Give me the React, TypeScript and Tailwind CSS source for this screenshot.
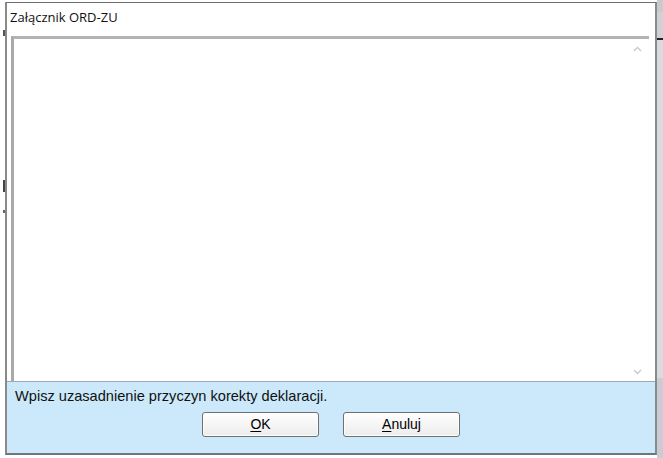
import React from "react";

const ui = { fontFamily: '"Open Sans", "Noto Sans", sans-serif' };
const arial = { fontFamily: '"Liberation Sans", Arial, sans-serif' };

function DialogButton({ hot, rest }: { hot: string; rest: string }) {
  return (
    <button
      type="button"
      className="flex h-[25px] w-[117px] items-center justify-center rounded-[3px] border border-[#707070] bg-gradient-to-b from-[#ffffff] to-[#ececec] text-[14px] text-black shadow-[inset_0_0_0_1px_#fdfdfd]"
      style={arial}
    >
      <span className="underline underline-offset-2">{hot}</span>
      {rest}
    </button>
  );
}

export default function App() {
  return (
    <div className="flex h-[458px] w-[663px] overflow-hidden bg-white">
      {/* app window peeking out on the left */}
      <div className="relative w-[5px] shrink-0 bg-white">
        <div className="absolute left-[3px] top-[30px] h-[6px] w-[2px] bg-[#555]" />
        <div className="absolute left-[3px] top-[180px] h-[12px] w-[2px] bg-[#444]" />
        <div className="absolute left-[3px] top-[210px] h-[3px] w-[2px] bg-[#666]" />
      </div>

      {/* dialog */}
      <div className="mt-[2px] mb-[3px] flex flex-1 flex-col border-x-2 border-t border-b-2 border-x-[#8a8a8a] border-t-[#6e6e6e] border-b-[#6e7480] bg-white">
        <div className="h-[33px] pl-[3px] pt-[5px] text-[13px] text-[#111]" style={ui}>
          Załącznik ORD-ZU
        </div>

        <div className="ml-[4px] mr-[6px] flex flex-1 border-l-[3px] border-t-[3px] border-l-[#a9a9a9] border-t-[#b3b3b3] bg-white">
          <textarea className="flex-1 resize-none bg-white outline-none" />
          <div className="flex w-[24px] flex-col items-center justify-between pb-[6px] pt-[7px] text-[#c8c8c8]">
            <svg width="9" height="6" viewBox="0 0 9 6">
              <path d="M1 5 L4.5 1.5 L8 5" fill="none" stroke="currentColor" strokeWidth="1.3" />
            </svg>
            <svg width="9" height="6" viewBox="0 0 9 6">
              <path d="M1 1 L4.5 4.5 L8 1" fill="none" stroke="currentColor" strokeWidth="1.3" />
            </svg>
          </div>
        </div>

        <div className="flex h-[72px] flex-col border-t border-[#a0aab4] bg-[#cce9fb]">
          <div className="pl-[8px] pt-[5px] text-[14.6px] leading-[18px] text-[#111]" style={arial}>
            Wpisz uzasadnienie przyczyn korekty deklaracji.
          </div>
          <div className="mt-[7px] flex justify-center gap-[24px]">
            <DialogButton hot="O" rest="K" />
            <DialogButton hot="A" rest="nuluj" />
          </div>
        </div>
      </div>

      {/* app window peeking out on the right */}
      <div className="flex w-[6px] shrink-0 flex-col bg-[#dfe1e4]">
        <div className="h-[12px] bg-[#c8cacc]" />
        <div className="h-[28px] border-b-2 border-[#222] bg-[#cfd1d4]" />
        <div className="flex-1 bg-[#d9dbde]" />
        <div className="h-[80px] bg-[#c9ccd2]" />
      </div>
    </div>
  );
}
